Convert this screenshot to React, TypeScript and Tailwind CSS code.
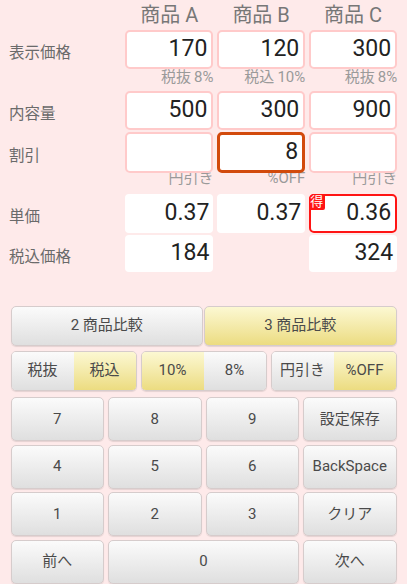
import React from "react";

const font = { fontFamily: 'Roboto, "Noto Sans CJK JP", sans-serif' };

const cols = "grid grid-cols-[121.5px_88.4px_88.4px_88.4px] gap-x-[3.5px]";

function Box({ value, kind = "input" }: { value?: string; kind?: "input" | "focus" | "plain" | "best" | "none" }) {
  if (kind === "none") return <div />;
  let cls = "relative h-full flex items-center justify-end pr-[4px] text-[23px] text-[#222] bg-white ";
  if (kind === "input") cls += "border-2 border-[#ffcaca] rounded-[5px]";
  if (kind === "focus") cls += "border-[3px] border-[#d24a0c] rounded-[5px] pr-[3px]";
  if (kind === "plain") cls += "rounded-[4px] pr-[4px]";
  if (kind === "best") cls += "border-2 border-[#ff1414] rounded-[5px] pr-[3px]";
  return (
    <div className={cls}>
      {kind === "best" && (
        <div className="absolute left-[-2px] top-[-2px] w-[16px] h-[16px] bg-[#ff1414] rounded-tl-[5px] rounded-br-[2px] text-white text-[13px] leading-[15px] flex items-start justify-center">
          得
        </div>
      )}
      {value}
    </div>
  );
}

function Label({ text }: { text: string }) {
  return <div className="flex items-center pl-[9px] pt-[9px] text-[15.5px] text-[#6a6a6a]">{text}</div>;
}

function Sub({ text }: { text: string }) {
  return (
    <div className="flex justify-end items-start text-[15px] text-[#9a9a9a] leading-[20px] pt-[1px] whitespace-nowrap">
      {text}
    </div>
  );
}

const btn =
  "flex items-center justify-center text-[15px] text-[#4a4a4a] border border-[#d6cccc] rounded-[5px] shadow-[0_1px_1px_rgba(0,0,0,0.10)]";
const gray = "bg-gradient-to-b from-[#fbfbfb] to-[#dfdfdf]";
const yellow = "bg-gradient-to-b from-[#fcf8d2] to-[#ecdc80]";
const segGray = "flex-1 h-full flex items-center justify-center bg-gradient-to-b from-[#fbfbfb] to-[#dfdfdf]";
const segYellow = "flex-1 h-full flex items-center justify-center bg-gradient-to-b from-[#fcf8d2] to-[#ecdc80]";

export default function App() {
  return (
    <div className="w-[407px] h-[584px] bg-[#feeaea] overflow-hidden flex flex-col" style={font}>
      <div className={cols + " h-[30px] pb-[4px] items-center text-[20px] text-[#777]"}>
        <div />
        <div className="text-center">商品 A</div>
        <div className="text-center">商品 B</div>
        <div className="text-center">商品 C</div>
      </div>
      <div className={cols + " h-[36px]"}>
        <Label text="表示価格" />
        <Box value="170" />
        <Box value="120" />
        <Box value="300" />
      </div>
      <div className={cols + " h-[25px]"}>
        <div />
        <Sub text={"税抜\u20098%"} />
        <Sub text={"税込\u200910%"} />
        <Sub text={"税抜\u20098%"} />
      </div>
      <div className={cols + " h-[36px]"}>
        <Label text="内容量" />
        <Box value="500" />
        <Box value="300" />
        <Box value="900" />
      </div>
      <div className="h-[5px]" />
      <div className={cols + " h-[35px]"}>
        <Label text="割引" />
        <Box value="" />
        <Box value="8" kind="focus" />
        <Box value="" />
      </div>
      <div className={cols + " h-[27px]"}>
        <div />
        <Sub text="円引き" />
        <Sub text="%OFF" />
        <Sub text="円引き" />
      </div>
      <div className={cols + " h-[37px]"}>
        <Label text="単価" />
        <Box value="0.37" kind="plain" />
        <Box value="0.37" kind="plain" />
        <Box value="0.36" kind="best" />
      </div>
      <div className="h-[4px]" />
      <div className={cols + " h-[37px]"}>
        <Label text="税込価格" />
        <Box value="184" kind="plain" />
        <Box kind="none" />
        <Box value="324" kind="plain" />
      </div>
      <div className="h-[33.5px]" />
      <div className="px-[10.5px] flex flex-col">
        <div className="flex h-[40px] gap-[1px]">
          <div className={btn + " " + gray + " flex-1"}>2 商品比較</div>
          <div className={btn + " " + yellow + " flex-1"}>3 商品比較</div>
        </div>
        <div className="flex h-[40px] gap-[4px] mt-[5px]">
          <div className={btn + " flex-1 overflow-hidden"}>
            <div className={segGray}>税抜</div>
            <div className={segYellow}>税込</div>
          </div>
          <div className={btn + " flex-1 overflow-hidden"}>
            <div className={segYellow}>10%</div>
            <div className={segGray}>8%</div>
          </div>
          <div className={btn + " flex-1 overflow-hidden"}>
            <div className={segGray}>円引き</div>
            <div className={segYellow}>%OFF</div>
          </div>
        </div>
        <div className="grid grid-cols-4 gap-x-[4px] gap-y-[3.5px] mt-[6.5px] auto-rows-[44px]">
          <div className={btn + " " + gray}>7</div>
          <div className={btn + " " + gray}>8</div>
          <div className={btn + " " + gray}>9</div>
          <div className={btn + " " + gray}>設定保存</div>
          <div className={btn + " " + gray}>4</div>
          <div className={btn + " " + gray}>5</div>
          <div className={btn + " " + gray}>6</div>
          <div className={btn + " " + gray + " text-[14.5px]"}>BackSpace</div>
          <div className={btn + " " + gray}>1</div>
          <div className={btn + " " + gray}>2</div>
          <div className={btn + " " + gray}>3</div>
          <div className={btn + " " + gray}>クリア</div>
          <div className={btn + " " + gray}>前へ</div>
          <div className={btn + " " + gray + " col-span-2"}>0</div>
          <div className={btn + " " + gray}>次へ</div>
        </div>
      </div>
    </div>
  );
}
